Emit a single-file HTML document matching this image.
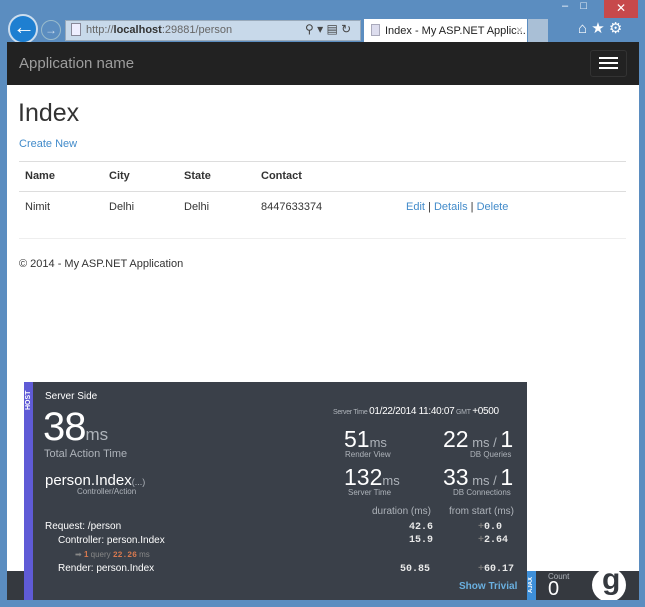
<!DOCTYPE html>
<html><head><style>
*{margin:0;padding:0;box-sizing:border-box}
body{width:645px;height:607px;overflow:hidden;background:#5b8dc0;font-family:"Liberation Sans",sans-serif;position:relative}
.a{position:absolute;white-space:nowrap}
.lnk{color:#428bca}
.g{color:#fff;font-family:"Liberation Sans",sans-serif}
.d{color:#aeb3ba}
.mono{font-family:"Liberation Mono",monospace;font-weight:bold;color:#e8e8e8;font-size:10px}
</style></head><body>
<div class="a" style="left:8px;top:14px;width:30px;height:30px;border-radius:50%;background:#1e7fd1;border:2px solid #cde;"></div>
<div class="a" style="left:13px;top:14px;color:#fff;font-size:22px;font-weight:bold;">&#8592;</div>
<div class="a" style="left:41px;top:20px;width:20px;height:20px;border-radius:50%;border:1px solid #9bc;color:#cde;font-size:12px;text-align:center;line-height:18px">&#8594;</div>
<div class="a" style="left:65px;top:20px;width:296px;height:21px;background:#c8d9ea;border:1px solid #9ab;"></div>
<div class="a" style="left:71px;top:23px;width:10px;height:13px;background:#eef;border:1px solid #889"></div>
<div class="a" style="left:86px;top:24px;font-size:11px;color:#666">http://<b style="color:#333">localhost</b>:29881/person</div>
<div class="a" style="left:305px;top:22px;font-size:12px;color:#444">&#9906; ▾ ▤ ↻</div>
<div class="a" style="left:364px;top:19px;width:163px;height:23px;background:#fff;"></div>
<div class="a" style="left:371px;top:24px;width:9px;height:12px;background:#dde;border:1px solid #aab"></div>
<div class="a" style="left:385px;top:25px;font-size:11px;color:#222">Index - My ASP.NET Applic...</div>
<div class="a" style="left:516px;top:23px;font-size:12px;color:#aaa">×</div>
<div class="a" style="left:528px;top:19px;width:20px;height:23px;background:#a9bfd6"></div>
<div class="a" style="left:578px;top:19px;font-size:15px;color:#fff">⌂ ★ ⚙</div>
<div class="a" style="left:562px;top:0px;font-size:11px;color:#fff">–&nbsp;&nbsp;&nbsp;&nbsp;□</div>
<div class="a" style="left:604px;top:0;width:34px;height:18px;background:#c7494b;color:#fff;font-size:12px;text-align:center;line-height:16px">✕</div>
<div class="a" style="left:7px;top:42px;width:632px;height:558px;background:#fff"></div>
<div class="a" style="left:7px;top:42px;width:632px;height:43px;background:#222"></div>
<div class="a" style="left:19px;top:55px;font-size:15px;color:#9d9d9d">Application name</div>
<div class="a" style="left:590px;top:50px;width:37px;height:27px;border:1px solid #333;border-radius:3px"></div>
<div class="a" style="left:599px;top:57px;width:19px;height:2px;background:#fff;box-shadow:0 5px 0 #fff,0 10px 0 #fff"></div>
<div class="a" style="left:18px;top:99px;font-size:25px;color:#333">Index</div>
<div class="a lnk" style="left:19px;top:138px;font-size:11px">Create New</div>
<div class="a" style="left:19px;top:161px;width:607px;height:1px;background:#ddd"></div>
<div class="a" style="left:25px;top:170px;font-size:11px;font-weight:bold;color:#333">Name</div>
<div class="a" style="left:109px;top:170px;font-size:11px;font-weight:bold;color:#333">City</div>
<div class="a" style="left:184px;top:170px;font-size:11px;font-weight:bold;color:#333">State</div>
<div class="a" style="left:261px;top:170px;font-size:11px;font-weight:bold;color:#333">Contact</div>
<div class="a" style="left:19px;top:191px;width:607px;height:1px;background:#ddd"></div>
<div class="a" style="left:25px;top:201px;font-size:11px;color:#333">Nimit</div>
<div class="a" style="left:109px;top:201px;font-size:11px;color:#333">Delhi</div>
<div class="a" style="left:184px;top:201px;font-size:11px;color:#333">Delhi</div>
<div class="a" style="left:261px;top:201px;font-size:11px;color:#333">8447633374</div>
<div class="a" style="left:406px;top:201px;font-size:11px;color:#333"><span class="lnk">Edit</span> | <span class="lnk">Details</span> | <span class="lnk">Delete</span></div>
<div class="a" style="left:19px;top:238px;width:607px;height:1px;background:#eee"></div>
<div class="a" style="left:19px;top:258px;font-size:11px;color:#333">© 2014 - My ASP.NET Application</div>
<div class="a" style="left:7px;top:571px;width:632px;height:29px;background:#35393f"></div>
<div class="a" style="left:24px;top:382px;width:503px;height:218px;background:#3a4049"></div>
<div class="a" style="left:24px;top:382px;width:9px;height:218px;background:#5f5bd6"></div>
<div class="a g" style="left:25px;top:386px;font-size:7px;font-weight:bold;writing-mode:vertical-rl;transform:rotate(180deg);height:24px">HOST</div>
<div class="a g" style="left:45px;top:391px;font-size:10px">Server Side</div>
<div class="a g" style="left:43px;top:407px;font-size:40px;line-height:40px;letter-spacing:-1px">38<span class="d" style="font-size:17px;letter-spacing:0">ms</span></div>
<div class="a d" style="left:44px;top:448px;font-size:11px">Total Action Time</div>
<div class="a g" style="left:45px;top:472px;font-size:15px">person.Index<span class="d" style="font-size:9px">(...)</span></div>
<div class="a d" style="left:77px;top:487px;font-size:8px">Controller/Action</div>
<div class="a g" style="left:45px;top:521px;font-size:10px">Request: /person</div>
<div class="a g" style="left:58px;top:535px;font-size:10px">Controller: person.Index</div>
<div class="a" style="left:75px;top:550px;font-size:8px;color:#888">➡ <b style="color:#d9794f">1</b> query <b style="color:#d9794f;font-family:'Liberation Mono',monospace">22.26</b> ms</div>
<div class="a g" style="left:58px;top:563px;font-size:10px">Render: person.Index</div>
<div class="a d" style="left:333px;top:406px;font-size:7px;letter-spacing:-0.3px">Server Time <span style="color:#fff;font-size:10px">01/22/2014 11:40:07</span> GMT <span style="color:#fff;font-size:10px">+0500</span></div>
<div class="a g" style="left:344px;top:426px;font-size:23px">51<span class="d" style="font-size:13px">ms</span></div>
<div class="a d" style="left:345px;top:450px;font-size:8px">Render View</div>
<div class="a g" style="left:443px;top:426px;font-size:23px">22<span class="d" style="font-size:13px"> ms / </span>1</div>
<div class="a d" style="left:470px;top:450px;font-size:8px">DB Queries</div>
<div class="a g" style="left:344px;top:464px;font-size:23px">132<span class="d" style="font-size:13px">ms</span></div>
<div class="a d" style="left:348px;top:488px;font-size:8px">Server Time</div>
<div class="a g" style="left:443px;top:464px;font-size:23px">33<span class="d" style="font-size:13px"> ms / </span>1</div>
<div class="a d" style="left:453px;top:488px;font-size:8px">DB Connections</div>
<div class="a d" style="left:372px;top:506px;font-size:10px">duration (ms)</div>
<div class="a d" style="left:449px;top:506px;font-size:10px">from start (ms)</div>
<div class="a mono" style="left:409px;top:522px">42.6</div>
<div class="a mono" style="left:409px;top:535px">15.9</div>
<div class="a mono" style="left:400px;top:564px">50.85</div>
<div class="a mono" style="left:478px;top:522px"><span style="color:#777">+</span>0.0</div>
<div class="a mono" style="left:478px;top:535px"><span style="color:#777">+</span>2.64</div>
<div class="a mono" style="left:478px;top:564px"><span style="color:#777">+</span>60.17</div>
<div class="a" style="left:459px;top:581px;font-size:10px;color:#6ab0e0;font-weight:bold">Show Trivial</div>
<div class="a" style="left:527px;top:571px;width:9px;height:29px;background:#3e8fd8"></div>
<div class="a g" style="left:528px;top:577px;font-size:6px;font-weight:bold;writing-mode:vertical-rl;transform:rotate(180deg)">AJAX</div>
<div class="a d" style="left:548px;top:572px;font-size:8px">Count</div>
<div class="a g" style="left:548px;top:578px;font-size:20px">0</div>
<div class="a" style="left:592px;top:568px;width:34px;height:34px;border-radius:50%;background:#fff"></div>
<div class="a" style="left:602px;top:563px;font-size:30px;font-weight:bold;color:#35393f">g</div>
<div class="a" style="left:0;top:600px;width:645px;height:7px;background:#5b8dc0"></div>
</body></html>
